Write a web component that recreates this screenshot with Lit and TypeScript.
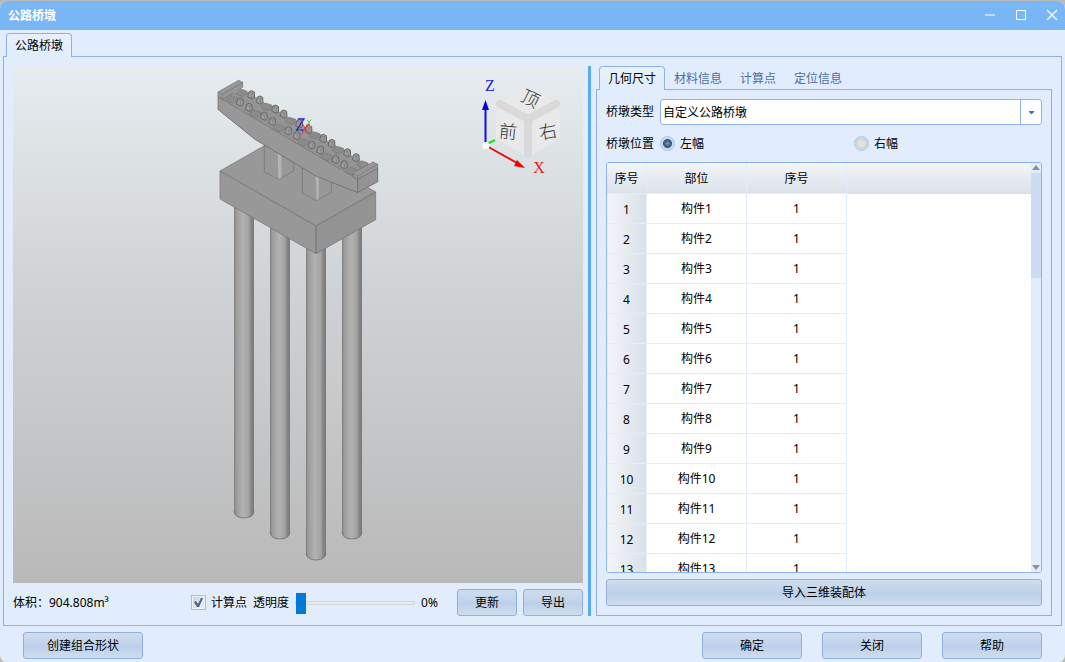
import { LitElement, html, svg, css } from "lit";
import { customElement, property, state } from "lit/decorators.js";
import { classMap } from "lit/directives/class-map.js";

const baseStyles = css`
  *,
  *::before,
  *::after {
    box-sizing: border-box;
  }
  button,
  input,
  select {
    font: inherit;
    color: inherit;
    margin: 0;
  }
  .btn {
    height: 27px;
    padding: 0;
    border: 1px solid #90b0e0;
    border-radius: 3px;
    background: linear-gradient(#cfdeed, #bdd0eb 55%, #cfdeed);
    line-height: 18px;
  }
  .tabs {
    display: flex;
    margin-left: 3px;
    margin-bottom: -1px;
    position: relative;
  }
  .tab {
    height: 24px;
    padding: 2px 9px 0;
    border: 0;
    background: none;
    color: #4a6ea5;
    line-height: 18px;
  }
  .tab.active {
    padding: 0 8px;
    color: #000;
    border: 1px solid #8cb4ea;
    border-bottom: 0;
    border-radius: 4px 4px 0 0;
    background: linear-gradient(#e9f0fa, #e1edfc);
  }
`;

/* 3D view of the pier with the orientation cube */
@customElement("pier-view")
export class PierView extends LitElement {
  static styles = css`
    :host {
      display: block;
      min-height: 0;
      overflow: hidden;
      background: linear-gradient(#e6ecef, #d0d3d6 42%, #b9b9b9);
    }
    svg {
      display: block;
      width: 100%;
      height: 100%;
    }
    .edge {
      fill: #989898;
      stroke: #6f6f6f;
      stroke-width: 2;
      stroke-linejoin: round;
    }
    .side {
      fill: #939393;
    }
    .pad {
      fill: #8b8b8b;
      stroke: #777;
    }
    .deck {
      fill: #949494;
    }
    .block {
      fill: #9b9b9b;
      stroke: #666;
      stroke-width: 3;
    }
    .crease {
      fill: none;
      stroke: #7a7a7a;
      stroke-width: 2;
    }
    .strip {
      fill: #b4b4b4;
    }
    .face {
      fill: #e9e9e9;
    }
    .ridge {
      fill: none;
      stroke: #d9d9d9;
      stroke-width: 8;
      stroke-linecap: round;
      stroke-linejoin: round;
    }
    .glyph {
      font: 300 18px "Noto Sans CJK SC", sans-serif;
      fill: #333;
      text-anchor: middle;
    }
    .axis {
      font: 16px "Liberation Serif", serif;
      text-anchor: middle;
    }
    .z {
      fill: #1c1ce8;
    }
    .x {
      fill: #e81c1c;
    }
  `;

  private pile(x: number, top: number, bottom: number) {
    return svg`
      <path d="M${x} ${top}V${bottom}q1 6 10 6q9 0 10 -6V${top}Z" fill="url(#pile)"></path>
      <path d="M${x} ${bottom - 1}q1 7 10 7q9 0 10 -7" fill="none" stroke="#6e6e6e" stroke-width="0.8"></path>`;
  }

  private block([x, y]: number[]) {
    return svg`<g transform="translate(${x} ${y})">
      <path class="edge block" d="M-7 -10L0 -13L9 -9L10 7L2 12L-11 5L-9 -2Z"></path>
      <path class="crease" d="M-7 -9L2 -4L9 -8M2 -4V11"></path>
    </g>`;
  }

  private pad([x, y]: number[]) {
    return svg`<path class="edge pad" d="M${x - 18} ${y + 1}L${x - 4} ${y - 11}L${x + 15} ${y - 5}L${x + 18} ${y + 3}L${x + 4} ${y + 11}L${x - 8} ${y + 9}Z"></path>`;
  }

  render() {
    const backPads = [[125, 68], [200, 110], [272, 153], [345, 196], [415, 240], [488, 283]];
    const frontPads = [[97, 88], [165, 131], [237, 174], [310, 217], [380, 261], [455, 303]];
    const backBlocks = [[154, 75], [179, 91], [226, 118], [251, 133], [298, 162], [326, 179], [370, 206], [395, 221], [442, 249], [468, 264]];
    const frontBlocks = [[120, 97], [147, 113], [192, 139], [217, 155], [265, 183], [290, 198], [335, 226], [361, 241], [407, 269], [432, 285]];
    return html`
      <svg viewBox="13 66 570 517" role="img" aria-label="公路桥墩">
        <defs>
          <linearGradient id="pile">
            <stop offset="0" stop-color="#7c7c7c"></stop>
            <stop offset="0.1" stop-color="#9b9b9b"></stop>
            <stop offset="0.45" stop-color="#b2b2b2"></stop>
            <stop offset="0.75" stop-color="#a2a2a2"></stop>
            <stop offset="0.83" stop-color="#8a8a8a"></stop>
            <stop offset="1" stop-color="#787878"></stop>
          </linearGradient>
        </defs>
        ${this.pile(234, 200, 512)} ${this.pile(342, 220, 533)}
        ${this.pile(270, 220, 533)} ${this.pile(306, 240, 554)}
        <g transform="translate(200 70) scale(0.3333)">
          <path class="edge" d="M60 303L239 201L527 366L348 468Z"></path>
          <path class="edge" d="M60 303V387L348 551V468Z"></path>
          <path class="edge side" d="M348 468L527 366V449L348 551Z"></path>
          <path class="edge" d="M193 220V305L235 328L281 303V250Z"></path>
          <path class="strip" d="M233 240H244V323L235 328Z"></path>
          <path class="edge" d="M307 285V370L350 392L394 367V310Z"></path>
          <path class="strip" d="M347 300H356V388L350 391Z"></path>
          <path class="edge deck" d="M62 82L131 62L500 286L533 295V335L473 367L352 320L165 208L54 118Z"></path>
          ${backPads.map((p) => this.pad(p))}
          ${backBlocks.map((p) => this.block(p))}
          ${frontPads.map((p) => this.pad(p))}
          ${frontBlocks.map((p) => this.block(p))}
          <path class="edge" d="M54 66L116 31L128 37V52L68 88L54 80Z"></path>
          <path class="edge" d="M54 66L67 73L128 38M67 73V88" fill="none"></path>
          <path class="edge" d="M54 80L473 328V367L352 320L165 208L54 118Z"></path>
          <path class="edge side" d="M473 328L533 293V335L473 367Z"></path>
          <path class="edge" d="M458 310L519 276L533 283V295L473 328L460 321Z"></path>
          <path class="edge" d="M458 310L473 318L533 283M473 318V328" fill="none"></path>
          <path d="M293 147H312L290 180H310" fill="none" stroke="#2222e0" stroke-width="4"></path>
          <path d="M308 162L326 192M322 164L304 194M318 166L330 162" fill="none" stroke="#ee3030" stroke-width="3"></path>
          <path d="M322 150L327 156L333 149M327 156L323 164M294 184L304 178" fill="none" stroke="#30d830" stroke-width="3"></path>
        </g>

        <path class="face" d="M496 104L528 86L560 104V138L528 157L496 138Z"></path>
        <path class="ridge" d="M500 104L528 119L556 104M528 119V154"></path>
        <text class="glyph" x="0" y="6" transform="translate(530 99) rotate(27)">顶</text>
        <text class="glyph" x="0" y="6" transform="translate(508 132) rotate(5)">前</text>
        <text class="glyph" x="0" y="6" transform="translate(548 132) rotate(-10)">右</text>
        <path d="M485.500 145V108" stroke="#1010e8" stroke-width="2"></path>
        <path d="M482 110L485.500 100L489 110Z" fill="#0000e0"></path>
        <path d="M485 145L495 140" stroke="#20e020" stroke-width="2"></path>
        <path d="M485 145L517 163" stroke="#e81010" stroke-width="2"></path>
        <path d="M517 160L525 168L514 166Z" fill="#f00000"></path>
        <circle cx="486" cy="145.500" r="3.500" fill="#fff"></circle>
        <text class="axis z" x="490" y="91">Z</text>
        <text class="axis x" x="539" y="173">X</text>
      </svg>
    `;
  }
}

/* Component list with its scroll bar */
@customElement("part-table")
export class PartTable extends LitElement {
  @property({ type: Number }) count = 13;

  static styles = [
    baseStyles,
    css`
      :host {
        display: flex;
        min-height: 0;
        overflow: hidden;
        border: 1px solid #8cb4ea;
        border-radius: 3px;
        background: #fff;
      }
      .body {
        flex: 1;
        min-width: 0;
        overflow: hidden;
      }
      table {
        width: 100%;
        table-layout: fixed;
        border-collapse: separate;
        border-spacing: 0;
        text-align: center;
      }
      thead tr {
        background: linear-gradient(#f3f5f8, #dae1e9);
      }
      th,
      td {
        height: 30px;
        padding: 0;
        font-weight: normal;
        line-height: 18px;
        border-right: 1px solid #e1edfc;
        border-bottom: 1px solid #e1edfc;
      }
      thead th {
        height: 31px;
        padding-top: 2px;
      }
      th.fill,
      td.fill {
        border: 0;
      }
      tbody th {
        padding-top: 2px;
        background: linear-gradient(90deg, #f3f5f8, #dae1e9);
      }
      .col-index {
        width: 40px;
      }
      .col-data {
        width: 100px;
      }
      .bar {
        flex: none;
        width: 10px;
        display: flex;
        flex-direction: column;
        align-items: center;
        background: #e1edfc;
      }
      .bar svg {
        display: block;
        flex: none;
        width: 10px;
        height: 10px;
        fill: #919191;
      }
      .track {
        flex: 1;
        width: 100%;
      }
      .thumb {
        height: 27%;
        background: #cbddf3;
      }
    `,
  ];

  render() {
    const rows = Array.from({ length: this.count }, (_, i) => i + 1);
    return html`
      <div class="body">
        <table>
          <colgroup>
            <col class="col-index" />
            <col class="col-data" />
            <col class="col-data" />
            <col />
          </colgroup>
          <thead>
            <tr>
              <th scope="col">序号</th>
              <th scope="col">部位</th>
              <th scope="col">序号</th>
              <th class="fill"></th>
            </tr>
          </thead>
          <tbody>
            ${rows.map(
              (n) => html`<tr>
                <th scope="row">${n}</th>
                <td>构件${n}</td>
                <td>1</td>
                <td class="fill"></td>
              </tr>`
            )}
          </tbody>
        </table>
      </div>
      <div class="bar">
        <svg viewBox="0 0 10 10"><path d="M1 7L5 2L9 7Z"></path></svg>
        <div class="track"><div class="thumb"></div></div>
        <svg viewBox="0 0 10 10"><path d="M1 3L5 8L9 3Z"></path></svg>
      </div>
    `;
  }
}

@customElement("app-root")
export class AppRoot extends LitElement {
  @state() private activeTab = 0;
  @state() private opacity = 0;

  static styles = [
    baseStyles,
    css`
      :host {
        display: block;
        height: 100vh;
        padding-top: 1px;
        background: #b9b9b9;
        color: #000;
        font: 12px/18px "Noto Sans", "Noto Sans CJK SC", sans-serif;
      }
      .window {
        height: 100%;
        display: flex;
        flex-direction: column;
        overflow: hidden;
        border-radius: 8px;
        background: #e1edfc;
      }
      .titlebar {
        flex: none;
        display: flex;
        align-items: center;
        gap: 11px;
        height: 29px;
        margin-bottom: 3px;
        padding: 0 3px 0 8px;
        background: #78b6f5;
        color: #fff;
      }
      .title {
        flex: 1;
        margin: 0;
        font-size: 12px;
        font-weight: bold;
      }
      .winbtn {
        width: 20px;
        height: 20px;
        padding: 0;
        border: 0;
        background: none;
      }
      .winbtn svg {
        display: block;
        width: 20px;
        height: 20px;
        fill: none;
        stroke: #fff;
      }
      .dialog {
        flex: 1;
        min-height: 0;
        display: flex;
        flex-direction: column;
        padding: 0 3px;
      }
      .panel {
        flex: 1;
        min-height: 0;
        padding: 9px;
        border: 1px solid #90b0e0;
      }
      .split {
        display: grid;
        grid-template-columns: minmax(0, 5fr) 3px minmax(0, 4fr);
        grid-template-rows: minmax(0, 1fr);
        gap: 5px;
      }
      .splitter {
        background: #59a9fb;
      }
      .left,
      .right {
        display: flex;
        flex-direction: column;
        min-height: 0;
      }
      .left {
        gap: 6px;
      }
      .left pier-view {
        flex: 1;
      }
      .toolbar {
        display: flex;
        align-items: center;
        gap: 6px;
      }
      .toolbar .btn {
        width: 60px;
      }
      .volume {
        flex: 1;
        white-space: nowrap;
      }
      .percent {
        width: 30px;
      }
      .check {
        display: flex;
        align-items: center;
        gap: 5px;
      }
      .box {
        display: grid;
        width: 15px;
        height: 15px;
      }
      .box > * {
        grid-area: 1 / 1;
      }
      .box input {
        appearance: none;
        width: 15px;
        height: 15px;
        border: 1px solid #a3bfe6;
        background: linear-gradient(135deg, #c9d3df, #f1f3f5);
        box-shadow: inset 0 0 0 1px #eef3fa;
      }
      .box svg {
        width: 15px;
        height: 15px;
        pointer-events: none;
        fill: #486386;
      }
      .box input:not(:checked) + svg {
        visibility: hidden;
      }
      .slider {
        appearance: none;
        width: 120px;
        height: 21px;
        background: none;
      }
      .slider::-webkit-slider-runnable-track {
        height: 4px;
        border: 1px solid #d6d6d6;
        background: #e7eaea;
      }
      .slider::-webkit-slider-thumb {
        appearance: none;
        width: 10px;
        height: 21px;
        margin-top: -9px;
        background: #0078d7;
      }
      .form {
        display: flex;
        flex-direction: column;
        gap: 6px;
      }
      .form part-table {
        flex: 1;
      }
      .row {
        display: flex;
        align-items: center;
        gap: 6px;
        min-height: 25px;
      }
      .combo {
        flex: 1;
        display: grid;
        grid-template-columns: minmax(0, 1fr) 22px;
        height: 26px;
      }
      .combo select {
        grid-area: 1 / 1 / 2 / 3;
        appearance: none;
        padding: 2px 24px 0 2px;
        border: 1px solid #8cb4ea;
        border-radius: 3px;
        background: #fff;
      }
      .combo svg {
        grid-area: 1 / 2;
        width: 22px;
        height: 26px;
        pointer-events: none;
      }
      .options {
        flex: 1;
        display: grid;
        grid-template-columns: 1fr 1fr;
        gap: 6px;
      }
      .radio {
        display: flex;
        align-items: center;
        gap: 5px;
      }
      .radio input {
        appearance: none;
        width: 15px;
        height: 15px;
        border: 1px solid #a9c4ea;
        border-radius: 50%;
        background: radial-gradient(circle, #e3e3e3 3px, #cdd3da 5px, #d9e4f2 7px);
      }
      .radio input:checked {
        background: radial-gradient(circle, #7ea6cc 0, #4a7098 2px, #3a5470 4px, #c9d6e6 5px, #d5e1f0 7px);
      }
      .footer {
        flex: none;
        display: flex;
        gap: 20px;
        padding: 6px 23px 3px;
        margin-bottom: 1px;
      }
      .footer .btn {
        width: 100px;
      }
      .footer .wide {
        width: 120px;
        margin-right: auto;
      }
    `,
  ];

  private onSlide(e: Event) {
    this.opacity = Number((e.target as HTMLInputElement).value);
  }

  render() {
    const tabs = ["几何尺寸", "材料信息", "计算点", "定位信息"];
    return html`
      <div class="window">
        <header class="titlebar">
          <h1 class="title">公路桥墩</h1>
          <button class="winbtn" aria-label="最小化">
            <svg viewBox="0 0 20 20"><path d="M5 9H15" stroke="#bbdafa" stroke-width="2"></path></svg>
          </button>
          <button class="winbtn" aria-label="最大化">
            <svg viewBox="0 0 20 20"><rect x="5.500" y="4.500" width="9" height="9"></rect></svg>
          </button>
          <button class="winbtn" aria-label="关闭窗口">
            <svg viewBox="0 0 20 20"><path d="M5 4L15 14M15 4L5 14" stroke-width="1.300"></path></svg>
          </button>
        </header>

        <main class="dialog">
          <div class="tabs" role="tablist">
            <button class="tab active" role="tab" aria-selected="true">公路桥墩</button>
          </div>
          <div class="panel split">
            <section class="left">
              <pier-view></pier-view>
              <div class="toolbar">
                <span class="volume">体积：904.808m³</span>
                <label class="check">
                  <span class="box">
                    <input type="checkbox" checked />
                    <svg viewBox="0 0 15 15"><path d="M3 7L5 6L7 9L10 3H12L8 12H6Z"></path></svg>
                  </span>
                  计算点
                </label>
                <label for="opacity">透明度</label>
                <input id="opacity" class="slider" type="range" min="0" max="100" .value=${String(this.opacity)} @input=${this.onSlide} />
                <span class="percent">${this.opacity}%</span>
                <button class="btn">更新</button>
                <button class="btn">导出</button>
              </div>
            </section>
            <div class="splitter"></div>
            <section class="right">
              <div class="tabs" role="tablist">
                ${tabs.map(
                  (name, i) => html`<button
                    class=${classMap({ tab: true, active: i === this.activeTab })}
                    role="tab"
                    aria-selected=${i === this.activeTab}
                    @click=${() => (this.activeTab = i)}
                  >${name}</button>`
                )}
              </div>
              <div class="panel form">
                <div class="row">
                  <label for="kind">桥墩类型</label>
                  <div class="combo">
                    <select id="kind">
                      <option>自定义公路桥墩</option>
                    </select>
                    <svg viewBox="0 0 22 26">
                      <path d="M0.500 1V25" stroke="#8cb4ea"></path>
                      <path d="M9 12H14V13L11.500 15.500L9 13Z" fill="#4b73ae"></path>
                    </svg>
                  </div>
                </div>
                <div class="row" role="radiogroup" aria-labelledby="side">
                  <span id="side">桥墩位置</span>
                  <div class="options">
                    <label class="radio"><input type="radio" name="side" checked />左幅</label>
                    <label class="radio"><input type="radio" name="side" />右幅</label>
                  </div>
                </div>
                <part-table></part-table>
                <button class="btn">导入三维装配体</button>
              </div>
            </section>
          </div>
        </main>

        <footer class="footer">
          <button class="btn wide">创建组合形状</button>
          <button class="btn">确定</button>
          <button class="btn">关闭</button>
          <button class="btn">帮助</button>
        </footer>
      </div>
    `;
  }
}
